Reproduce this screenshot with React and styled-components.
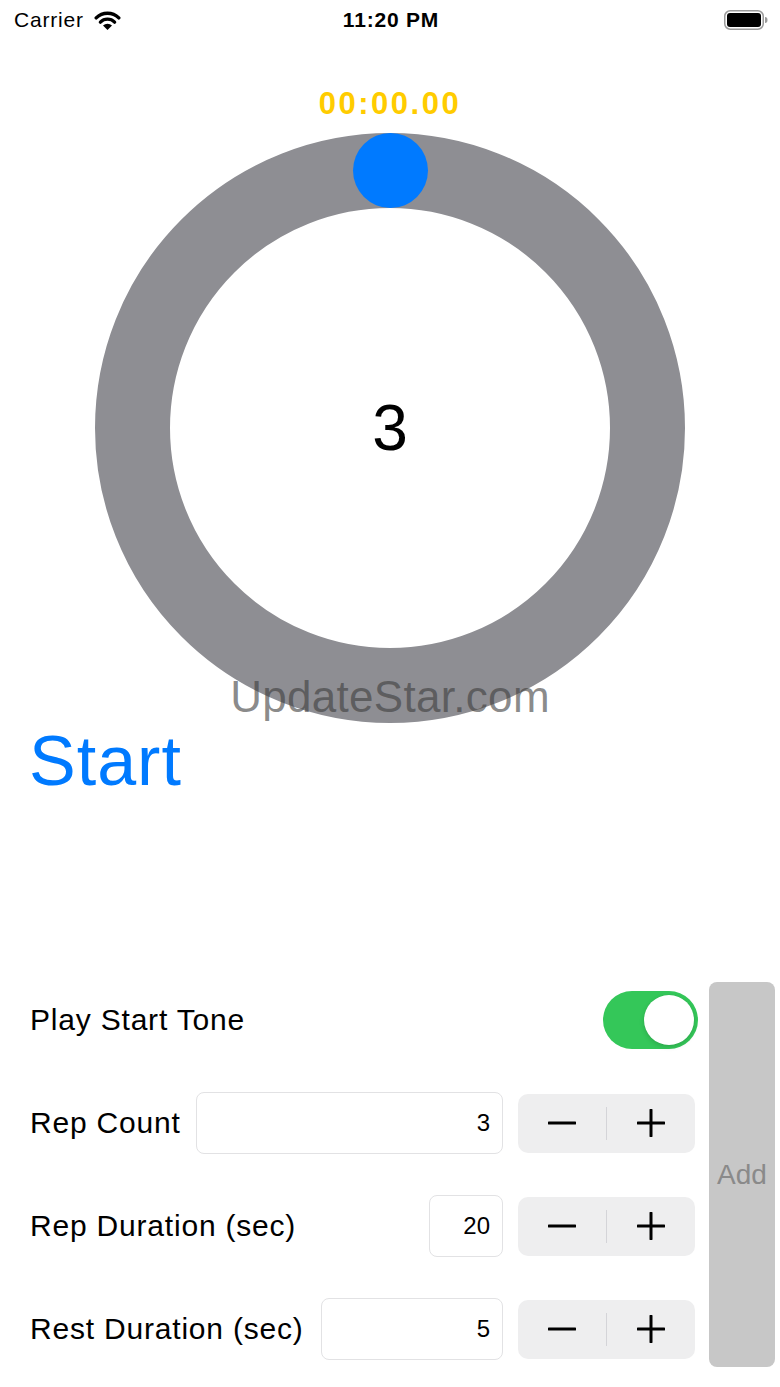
import React from 'react';
import styled, { createGlobalStyle } from 'styled-components';

const GlobalStyle = createGlobalStyle`
  html, body {
    margin: 0;
    padding: 0;
    background: #FFFFFF;
  }
  body {
    font-family: "Liberation Sans", Arial, sans-serif;
    color: #000000;
  }
  * {
    box-sizing: border-box;
  }
`;

const Screen = styled.div`
  width: 780px;
  min-height: 1387px;
  display: flex;
  flex-direction: column;
  background: #FFFFFF;
  overflow: hidden;
`;

const StatusBar = styled.div`
  height: 40px;
  display: grid;
  grid-template-columns: 1fr auto 1fr;
  align-items: center;
  padding: 0 12px 0 14px;
`;

const Carrier = styled.div`
  display: flex;
  align-items: center;
  gap: 10px;
  font-size: 21px;
  letter-spacing: 0.8px;
`;

const Clock = styled.div`
  font-size: 21px;
  font-weight: 700;
  letter-spacing: 0.8px;
`;

const BatteryWrap = styled.div`
  display: flex;
  justify-content: flex-end;
`;

const TimerSection = styled.div`
  position: relative;
  display: flex;
  flex-direction: column;
  align-items: center;
`;

const TimerLabel = styled.div`
  margin-top: 46px;
  font-size: 31px;
  line-height: 36px;
  font-weight: 700;
  color: #FFCC00;
  letter-spacing: 2.5px;
`;

const Ring = styled.div`
  position: relative;
  margin-top: 11px;
  width: 590px;
  height: 590px;
  border-radius: 50%;
  border: 75px solid #8E8E93;
  display: flex;
  align-items: center;
  justify-content: center;
`;

const Knob = styled.div`
  position: absolute;
  top: -75px;
  left: 50%;
  width: 75px;
  height: 75px;
  margin-left: -37.5px;
  border-radius: 50%;
  background: #007AFF;
`;

const Count = styled.div`
  font-size: 64px;
  line-height: 1;
`;

const Watermark = styled.div`
  position: absolute;
  left: 0;
  right: 0;
  bottom: 1px;
  text-align: center;
  font-size: 44px;
  line-height: 50px;
  letter-spacing: 0.3px;
  color: rgba(60, 60, 60, 0.6);
  pointer-events: none;
`;

const StartButton = styled.div`
  padding-left: 29px;
  font-size: 70px;
  line-height: 76px;
  letter-spacing: 1px;
  color: #007AFF;
`;

const Controls = styled.div`
  margin-top: auto;
  display: flex;
  align-items: flex-start;
  padding: 0 5px 20px 30px;
`;

const Fields = styled.div`
  flex: 1;
  display: flex;
  flex-direction: column;
  gap: 41px;
  padding-top: 7px;
`;

const Row = styled.div`
  height: 62px;
  display: flex;
  align-items: center;
`;

const Label = styled.div`
  font-size: 30px;
  letter-spacing: 0.8px;
  white-space: nowrap;
`;

const Toggle = styled.div`
  margin-left: auto;
  width: 95px;
  height: 58px;
  border-radius: 29px;
  background: #34C759;
  display: flex;
  align-items: center;
  justify-content: flex-end;
  padding-right: 4px;
`;

const ToggleKnob = styled.div`
  width: 50px;
  height: 50px;
  border-radius: 50%;
  background: #FFFFFF;
  box-shadow: 0 2px 5px rgba(0, 0, 0, 0.15), 0 0 0 0.5px rgba(0, 0, 0, 0.04);
`;

const Field = styled.div`
  margin-left: auto;
  width: ${p => p.$width}px;
  height: 62px;
  border: 1px solid #E2E2E4;
  border-radius: 8px;
  display: flex;
  align-items: center;
  justify-content: flex-end;
  padding-right: 12px;
  font-size: 24px;
`;

const Stepper = styled.div`
  margin-left: 15px;
  margin-right: 3px;
  width: 177px;
  height: 59px;
  border-radius: 10px;
  background: #EEEEEF;
  display: flex;
  align-items: center;
`;

const StepButton = styled.div`
  flex: 1;
  height: 100%;
  display: flex;
  align-items: center;
  justify-content: center;
`;

const StepDivider = styled.div`
  width: 1px;
  height: 33px;
  background: #D4D4D8;
`;

const AddButton = styled.div`
  margin-left: 11px;
  width: 66px;
  height: 385px;
  border-radius: 8px;
  background: #C7C7C7;
  display: flex;
  align-items: center;
  justify-content: center;
  font-size: 28px;
  color: #8A8A8A;
`;

const WifiIcon = () => (
  <svg width="27" height="21" viewBox="0 0 27 21">
    <path d="M2.2 7.9 A16 16 0 0 1 24.8 7.9" stroke="#000" strokeWidth="3.4" fill="none" strokeLinecap="round" />
    <path d="M6.4 12.1 A10 10 0 0 1 20.6 12.1" stroke="#000" strokeWidth="3.4" fill="none" strokeLinecap="round" />
    <path d="M13.5 20 L9 15.5 A6.4 6.4 0 0 1 18 15.5 Z" fill="#000" />
  </svg>
);

const BatteryIcon = () => (
  <svg width="44" height="20" viewBox="0 0 44 20">
    <rect x="0.75" y="0.75" width="38.5" height="18.5" rx="5.5" fill="none" stroke="#9A9A9A" strokeWidth="1.5" />
    <rect x="3" y="3" width="34" height="14" rx="3" fill="#000" />
    <path d="M41 7 Q43.5 7 43.5 10 Q43.5 13 41 13 Z" fill="#9A9A9A" />
  </svg>
);

const MinusIcon = () => (
  <svg width="28" height="28" viewBox="0 0 28 28">
    <path d="M1 14 H27" stroke="#000" strokeWidth="3" strokeLinecap="round" />
  </svg>
);

const PlusIcon = () => (
  <svg width="28" height="28" viewBox="0 0 28 28">
    <path d="M1 14 H27 M14 1 V27" stroke="#000" strokeWidth="3" strokeLinecap="round" />
  </svg>
);

const StepControl = () => (
  <Stepper>
    <StepButton><MinusIcon /></StepButton>
    <StepDivider />
    <StepButton><PlusIcon /></StepButton>
  </Stepper>
);

const settings = [
  { label: 'Rep Count', value: '3', width: 307 },
  { label: 'Rep Duration (sec)', value: '20', width: 74 },
  { label: 'Rest Duration (sec)', value: '5', width: 182 },
];

const App = () => {
  return (
    <Screen>
      <GlobalStyle />
      <StatusBar>
        <Carrier>
          Carrier
          <WifiIcon />
        </Carrier>
        <Clock>11:20 PM</Clock>
        <BatteryWrap>
          <BatteryIcon />
        </BatteryWrap>
      </StatusBar>

      <TimerSection>
        <TimerLabel>00:00.00</TimerLabel>
        <Ring>
          <Knob />
          <Count>3</Count>
        </Ring>
        <Watermark>UpdateStar.com</Watermark>
      </TimerSection>

      <StartButton>Start</StartButton>

      <Controls>
        <Fields>
          <Row>
            <Label>Play Start Tone</Label>
            <Toggle>
              <ToggleKnob />
            </Toggle>
          </Row>
          {settings.map(s => (
            <Row key={s.label}>
              <Label>{s.label}</Label>
              <Field $width={s.width}>{s.value}</Field>
              <StepControl />
            </Row>
          ))}
        </Fields>
        <AddButton>Add</AddButton>
      </Controls>
    </Screen>
  );
};

export default App;
